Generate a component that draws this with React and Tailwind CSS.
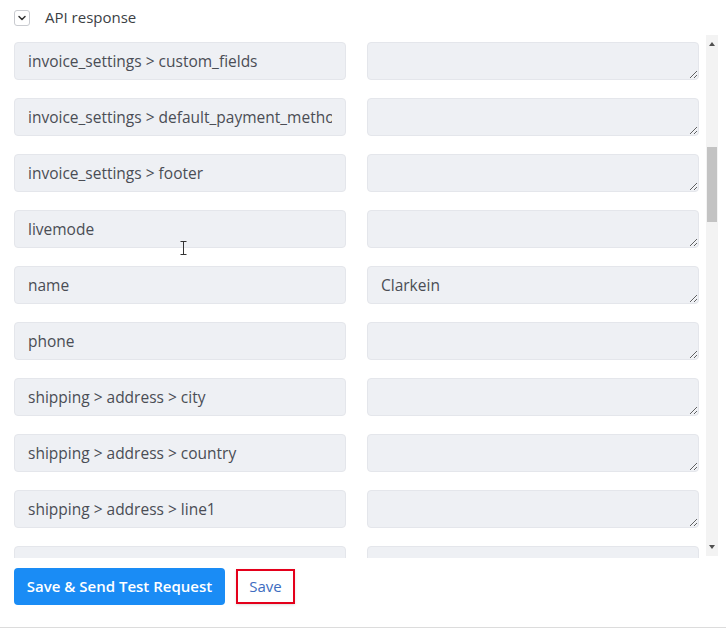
import { ChevronDown } from "lucide-react";

const rows = [
    { key: "invoice_settings > custom_fields", value: "" },
    { key: "invoice_settings > default_payment_method", value: "" },
    { key: "invoice_settings > footer", value: "" },
    { key: "livemode", value: "" },
    { key: "name", value: "Clarkein" },
    { key: "phone", value: "" },
    { key: "shipping > address > city", value: "" },
    { key: "shipping > address > country", value: "" },
    { key: "shipping > address > line1", value: "" },
    { key: "shipping > address > line2", value: "" },
];

const Row = ({ item }) => (
    <div className="flex gap-[21px] h-[38px] shrink-0">
        <input
            readOnly
            value={item.key}
            className="w-[332px] h-[38px] px-[13px] rounded-[4px] bg-[#eef0f4] border border-[#e4e6eb] text-[15.5px] text-[#4a4d55] outline-none"
        />
        <textarea
            readOnly
            value={item.value}
            className="w-[332px] h-[38px] px-[13px] py-[7px] rounded-[4px] bg-[#eef0f4] border border-[#e4e6eb] text-[15.5px] leading-[22px] text-[#4a4d55] outline-none overflow-hidden"
        />
    </div>
);

export default function App() {
    return (
        <div className="w-[726px] h-[628px] bg-white border-b border-[#dcdcdc] font-['Open_Sans','Noto_Sans',sans-serif] relative overflow-hidden">
            {/* header */}
            <div className="h-[35px] flex items-center gap-[15px] pl-[14px]">
                <div className="w-[16px] h-[16px] rounded-[3px] border border-[#c9cbd0] bg-white flex items-center justify-center">
                    <ChevronDown className="w-[12px] h-[12px] text-[#333]" strokeWidth={3} />
                </div>
                <span className="text-[15px] text-[#3c3f45]">API response</span>
            </div>

            {/* list + scrollbar */}
            <div className="flex h-[523px]">
                <div className="w-[706px] overflow-hidden pl-[14px] pt-[7px] flex flex-col gap-[18px]">
                    {rows.map((r) => (
                        <Row key={r.key} item={r} />
                    ))}
                </div>
                <div className="w-[12px] h-[521px] bg-[#f3f3f3] flex flex-col items-center">
                    <div className="h-[16px] flex items-center justify-center pt-[2px]">
                        <div className="w-0 h-0 border-l-[3px] border-r-[3px] border-b-[4px] border-l-transparent border-r-transparent border-b-[#505050]" />
                    </div>
                    <div className="h-[96px]" />
                    <div className="w-[10px] h-[75px] bg-[#c3c3c3]" />
                    <div className="flex-1" />
                    <div className="h-[16px] flex items-center justify-center pb-[2px]">
                        <div className="w-0 h-0 border-l-[3px] border-r-[3px] border-t-[4px] border-l-transparent border-r-transparent border-t-[#505050]" />
                    </div>
                </div>
            </div>

            {/* buttons */}
            <div className="flex items-center gap-[11px] pl-[14px] pt-[10px]">
                <button className="h-[37px] w-[211px] rounded-[4px] bg-[#1a8cf5] text-white text-[15px] font-semibold">
                    Save &amp; Send Test Request
                </button>
                <button className="h-[35px] w-[59px] border-2 border-[#e4001b] bg-white text-[#3d6cc0] text-[15px] shadow-sm">
                    Save
                </button>
            </div>

            {/* text cursor */}
            <svg className="absolute left-[180px] top-[241px]" width="7" height="14" viewBox="0 0 7 14">
                <path d="M0.5 0.5h6M3.5 0.5v13M0.5 13.5h6" stroke="#333" strokeWidth="1" fill="none" />
            </svg>
        </div>
    );
}
